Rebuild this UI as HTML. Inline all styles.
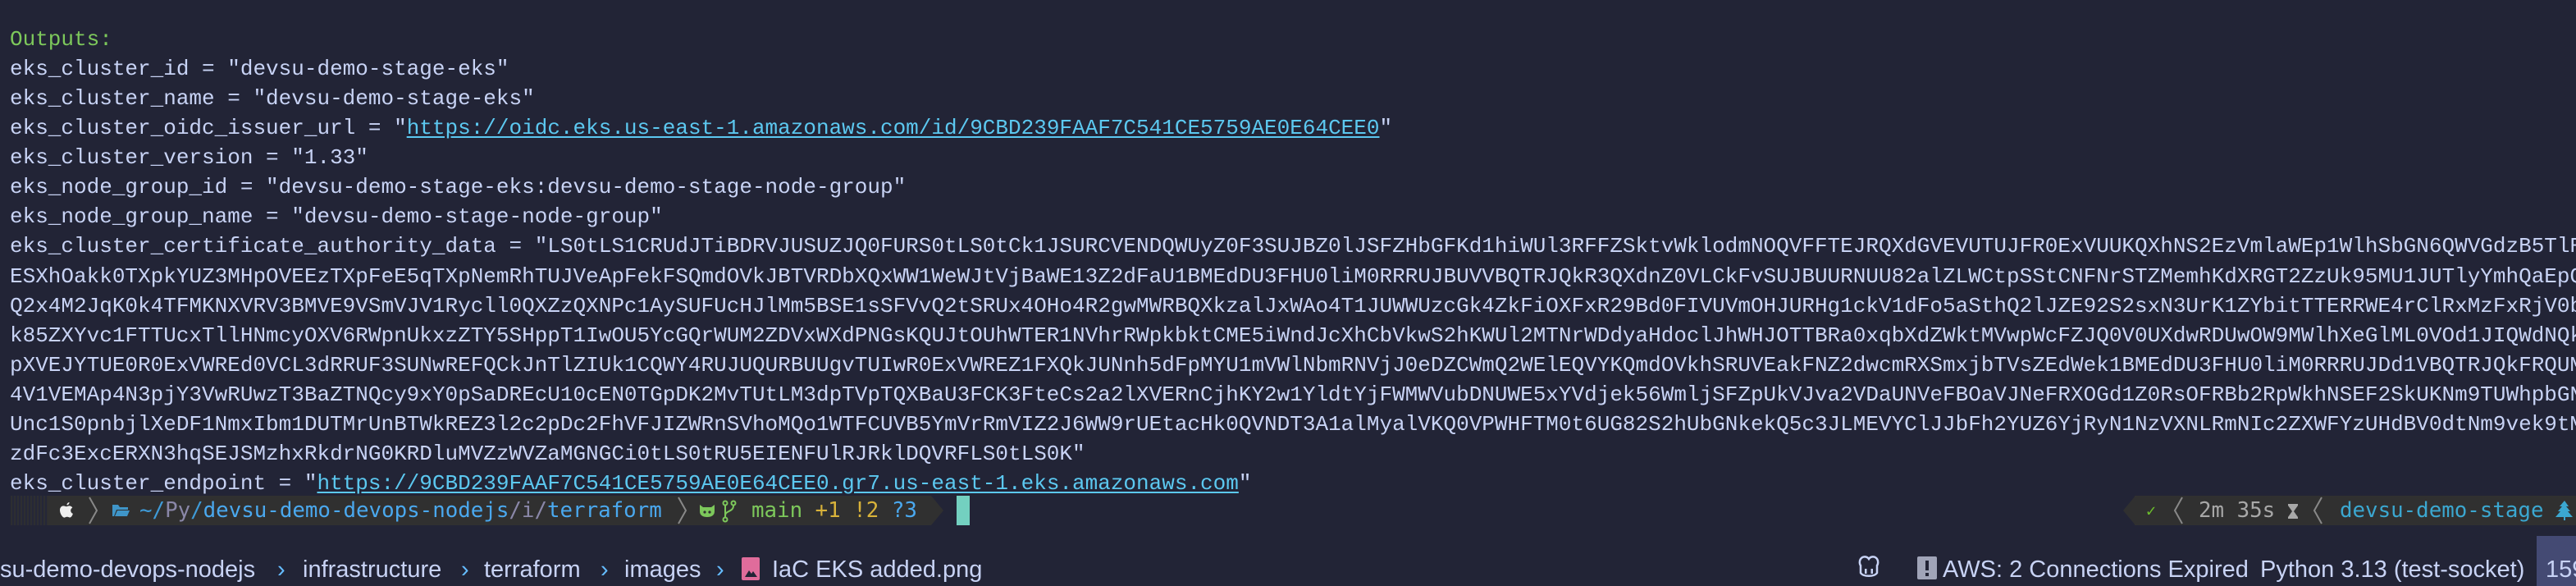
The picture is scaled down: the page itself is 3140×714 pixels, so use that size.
<!DOCTYPE html>
<html><head><meta charset="utf-8"><style>
html,body{margin:0;padding:0;width:3140px;height:714px;overflow:hidden;background:#222436;}
.t{position:absolute;left:12px;top:30px;margin:0;font-family:"Liberation Mono","DejaVu Sans Mono",monospace;font-size:26px;line-height:36.07px;color:#c8d3f5;white-space:pre;}
.g{color:#7dc85b}
.u{color:#5cc8f0;text-decoration:underline;text-underline-offset:3px}
.pb{position:absolute;top:604px;height:36px;background:#303030;font-family:"DejaVu Sans Mono","Liberation Mono",monospace;font-size:25.8px;line-height:36px;white-space:nowrap;}
.pb > *{position:absolute;top:0;}
.s{position:absolute;top:676px;font-family:"Liberation Sans","DejaVu Sans",sans-serif;font-size:29px;line-height:36px;color:#c8d3f5;white-space:pre;}
.ch{color:#65bcff}
</style></head><body>
<pre class="t"><span class="g">Outputs:</span>
eks_cluster_id = "devsu-demo-stage-eks"
eks_cluster_name = "devsu-demo-stage-eks"
eks_cluster_oidc_issuer_url = "<span class="u">https://oidc.eks.us-east-1.amazonaws.com/id/9CBD239FAAF7C541CE5759AE0E64CEE0</span>"
eks_cluster_version = "1.33"
eks_node_group_id = "devsu-demo-stage-eks:devsu-demo-stage-node-group"
eks_node_group_name = "devsu-demo-stage-node-group"
eks_cluster_certificate_authority_data = "LS0tLS1CRUdJTiBDRVJUSUZJQ0FURS0tLS0tCk1JSURCVENDQWUyZ0F3SUJBZ0lJSFZHbGFKd1hiWUl3RFFZSktvWklodmNOQVFFTEJRQXdGVEVUTUJFR0ExVUUKQXhNS2EzVmlaWEp1WlhSbGN6QWVGdzB5TlRP
ESXhOakk0TXpkYUZ3MHpOVEEzTXpFeE5qTXpNemRhTUJVeApFekFSQmdOVkJBTVRDbXQxWW1WeWJtVjBaWE13Z2dFaU1BMEdDU3FHU0liM0RRRUJBUVVBQTRJQkR3QXdnZ0VLCkFvSUJBUURNUU82alZLWCtpSStCNFNrSTZMemhKdXRGT2ZzUk95MU1JUTlyYmhQaEpQ
Q2x4M2JqK0k4TFMKNXVRV3BMVE9VSmVJV1Rycll0QXZzQXNPc1AySUFUcHJlMm5BSE1sSFVvQ2tSRUx4OHo4R2gwMWRBQXkzalJxWAo4T1JUWWUzcGk4ZkFiOXFxR29Bd0FIVUVmOHJURHg1ckV1dFo5aSthQ2lJZE92S2sxN3UrK1ZYbitTTERRWE4rClRxMzFxRjV0b
k85ZXYvc1FTTUcxTllHNmcyOXV6RWpnUkxzZTY5SHppT1IwOU5YcGQrWUM2ZDVxWXdPNGsKQUJtOUhWTER1NVhrRWpkbktCME5iWndJcXhCbVkwS2hKWUl2MTNrWDdyaHdoclJhWHJOTTBRa0xqbXdZWktMVwpWcFZJQ0V0UXdwRDUwOW9MWlhXeGlML0VOd1JIQWdNQk
pXVEJYTUE0R0ExVWREd0VCL3dRRUF3SUNwREFQCkJnTlZIUk1CQWY4RUJUQURBUUgvTUIwR0ExVWREZ1FXQkJUNnh5dFpMYU1mVWlNbmRNVjJ0eDZCWmQ2WElEQVYKQmdOVkhSRUVEakFNZ2dwcmRXSmxjbTVsZEdWek1BMEdDU3FHU0liM0RRRUJDd1VBQTRJQkFRQUM
4V1VEMAp4N3pjY3VwRUwzT3BaZTNQcy9xY0pSaDREcU10cEN0TGpDK2MvTUtLM3dpTVpTQXBaU3FCK3FteCs2a2lXVERnCjhKY2w1YldtYjFWMWVubDNUWE5xYVdjek56WmljSFZpUkVJva2VDaUNVeFBOaVJNeFRXOGd1Z0RsOFRBb2RpWkhNSEF2SkUKNm9TUWhpbGNUVStmNlpu
Unc1S0pnbjlXeDF1NmxIbm1DUTMrUnBTWkREZ3l2c2pDc2FhVFJIZWRnSVhoMQo1WTFCUVB5YmVrRmVIZ2J6WW9rUEtacHk0QVNDT3A1alMyalVKQ0VPWHFTM0t6UG82S2hUbGNkekQ5c3JLMEVYClJJbFh2YUZ6YjRyN1NzVXNLRmNIc2ZXWFYzUHdBV0dtNm9vek9tM
zdFc3ExcERXN3hqSEJSMzhxRkdrNG0KRDluMVZzWVZaMGNGCi0tLS0tRU5EIENFUlRJRklDQVRFLS0tLS0K"
eks_cluster_endpoint = "<span class="u">https://9CBD239FAAF7C541CE5759AE0E64CEE0.gr7.us-east-1.eks.amazonaws.com</span>"</pre>

<!-- left prompt -->
<div style="position:absolute;left:13px;top:604px;width:45px;height:36px;background:repeating-linear-gradient(90deg,#303030 0 2px,#262838 2px 4px);opacity:.8"></div>
<div class="pb" style="left:58px;width:1077px;color:#c8d3f5">
<svg style="left:14px;top:8px" width="18" height="22" viewBox="0 0 18 22"><path d="M12.5 0c.2 1.6-1.3 3.6-3 3.5-.2-1.6 1.3-3.4 3-3.5zM9 5.2c1 0 2.2-.9 3.6-.8 1.1.1 2.8.6 3.7 2.1-3.2 1.9-2.6 6.2.6 7.4-.6 1.8-1.9 4.6-3.6 4.6-1.5 0-1.7-.8-3.5-.8s-2.2.8-3.5.9C4.4 18.7 1 14 1 9.6c0-3.2 2.1-5.2 4.2-5.2 1.4 0 2.8.8 3.8.8z" fill="#eee"/></svg>
<svg style="left:48px;top:1px" width="16" height="34"><path d="M3 1 L12 17 L3 33" stroke="#888" stroke-width="2" fill="none"/></svg>
<svg style="left:78px;top:10px" width="22" height="16"><path d="M1 1h7l2 3h10v3H6l-3 8H1z M4 15l3-7h15l-3 7z" fill="#3f95c8"/></svg>
<span style="left:112px"><span style="color:#3f9bd8">~/</span><span style="color:#8a87a8">Py</span><span style="color:#3f9bd8">/</span><span style="color:#4aa8ee">devsu-demo-devops-nodejs</span><span style="color:#8a87a8">/i/</span><span style="color:#4aa8ee">terraform</span></span>
<svg style="left:766px;top:1px" width="16" height="34"><path d="M3 1 L12 17 L3 33" stroke="#888" stroke-width="2" fill="none"/></svg>
<svg style="left:793px;top:9px" width="22" height="18"><path d="M2 2l4 3h10l4-3v8c0 5-4 7-9 7s-9-2-9-7z" fill="#7dc85b"/><circle cx="8" cy="11" r="1.6" fill="#303030"/><circle cx="14" cy="11" r="1.6" fill="#303030"/></svg>
<svg style="left:822px;top:5px" width="18" height="28"><circle cx="4" cy="4" r="2.5" stroke="#7dc85b" stroke-width="2" fill="none"/><circle cx="14" cy="4" r="2.5" stroke="#7dc85b" stroke-width="2" fill="none"/><circle cx="4" cy="24" r="2.5" stroke="#7dc85b" stroke-width="2" fill="none"/><path d="M4 7v14M14 7c0 8-10 6-10 12" stroke="#7dc85b" stroke-width="2" fill="none"/></svg>
<span style="left:858px"><span style="color:#7dc85b">main</span> <span style="color:#d8b23a">+1 !2</span> <span style="color:#4aa8ee">?3</span></span>
</div>
<svg style="position:absolute;left:1135px;top:604px" width="16" height="36"><path d="M0 0 L15 18 L0 36z" fill="#303030"/></svg>
<div style="position:absolute;left:1166px;top:604px;width:16px;height:36px;background:#73d0c0"></div>

<!-- right prompt -->
<svg style="position:absolute;left:2587px;top:604px" width="16" height="36"><path d="M16 0 L1 18 L16 36z" fill="#303030"/></svg>
<div class="pb" style="left:2602px;width:538px;color:#aaa">
<span style="left:14px;color:#6cc02c;font-size:20px">✓</span>
<svg style="left:46px;top:1px" width="16" height="34"><path d="M12 1 L3 17 L12 33" stroke="#888" stroke-width="2" fill="none"/></svg>
<span style="left:78px;color:#a8a8a8">2m 35s</span>
<svg style="left:186px;top:9px" width="14" height="20"><path d="M1 1h12v2l-5 7 5 7v2H1v-2l5-7-5-7z" fill="#a8a8a8"/></svg>
<svg style="left:216px;top:1px" width="16" height="34"><path d="M12 1 L3 17 L12 33" stroke="#888" stroke-width="2" fill="none"/></svg>
<span style="left:250px;color:#3ba7d0">devsu-demo-stage</span>
<svg style="left:513px;top:6px" width="22" height="24"><path d="M11 0l5 7h-3l5 6h-3l6 7H12v4h-2v-4H0l6-7H3l5-6H5z" fill="#3ba7d0"/></svg>
</div>

<!-- status bar -->
<div class="s" style="left:0">su-demo-devops-nodejs</div>
<div class="s ch" style="left:338px">›</div>
<div class="s" style="left:369px">infrastructure</div>
<div class="s ch" style="left:562px">›</div>
<div class="s" style="left:590px">terraform</div>
<div class="s ch" style="left:732px">›</div>
<div class="s" style="left:761px">images</div>
<div class="s ch" style="left:873px">›</div>
<svg style="position:absolute;left:904px;top:679px" width="22" height="28"><rect width="22" height="28" rx="2" fill="#e06c9b"/><path d="M4 24l5-8 3 4 2-3 5 7z" fill="#222436"/></svg>
<div class="s" style="left:941px">IaC EKS added.png</div>

<svg style="position:absolute;left:2264px;top:677px" width="28" height="30"><path d="M4 4c3-4 8-3 10 0 2-3 7-4 10 0 2 3 1 7 0 8v9c-3 5-17 5-20 0v-9c-1-1-2-5 0-8z" fill="none" stroke="#c8d3f5" stroke-width="2.5"/><rect x="9" y="16" width="2.5" height="6" fill="#c8d3f5"/><rect x="16.5" y="16" width="2.5" height="6" fill="#c8d3f5"/></svg>
<svg style="position:absolute;left:2337px;top:678px" width="24" height="28"><rect width="24" height="28" rx="2" fill="#a0a4b8"/><rect x="10" y="5" width="4" height="12" fill="#222436"/><rect x="10" y="20" width="4" height="4" fill="#222436"/></svg>
<div class="s" style="left:2368px">AWS: 2 Connections Expired</div>
<div class="s" style="left:2755px">Python 3.13 (test-socket)</div>
<div style="position:absolute;left:3092px;top:653px;width:48px;height:61px;background:#444a73"></div>
<div class="s" style="left:3103px">159</div>
</body></html>
